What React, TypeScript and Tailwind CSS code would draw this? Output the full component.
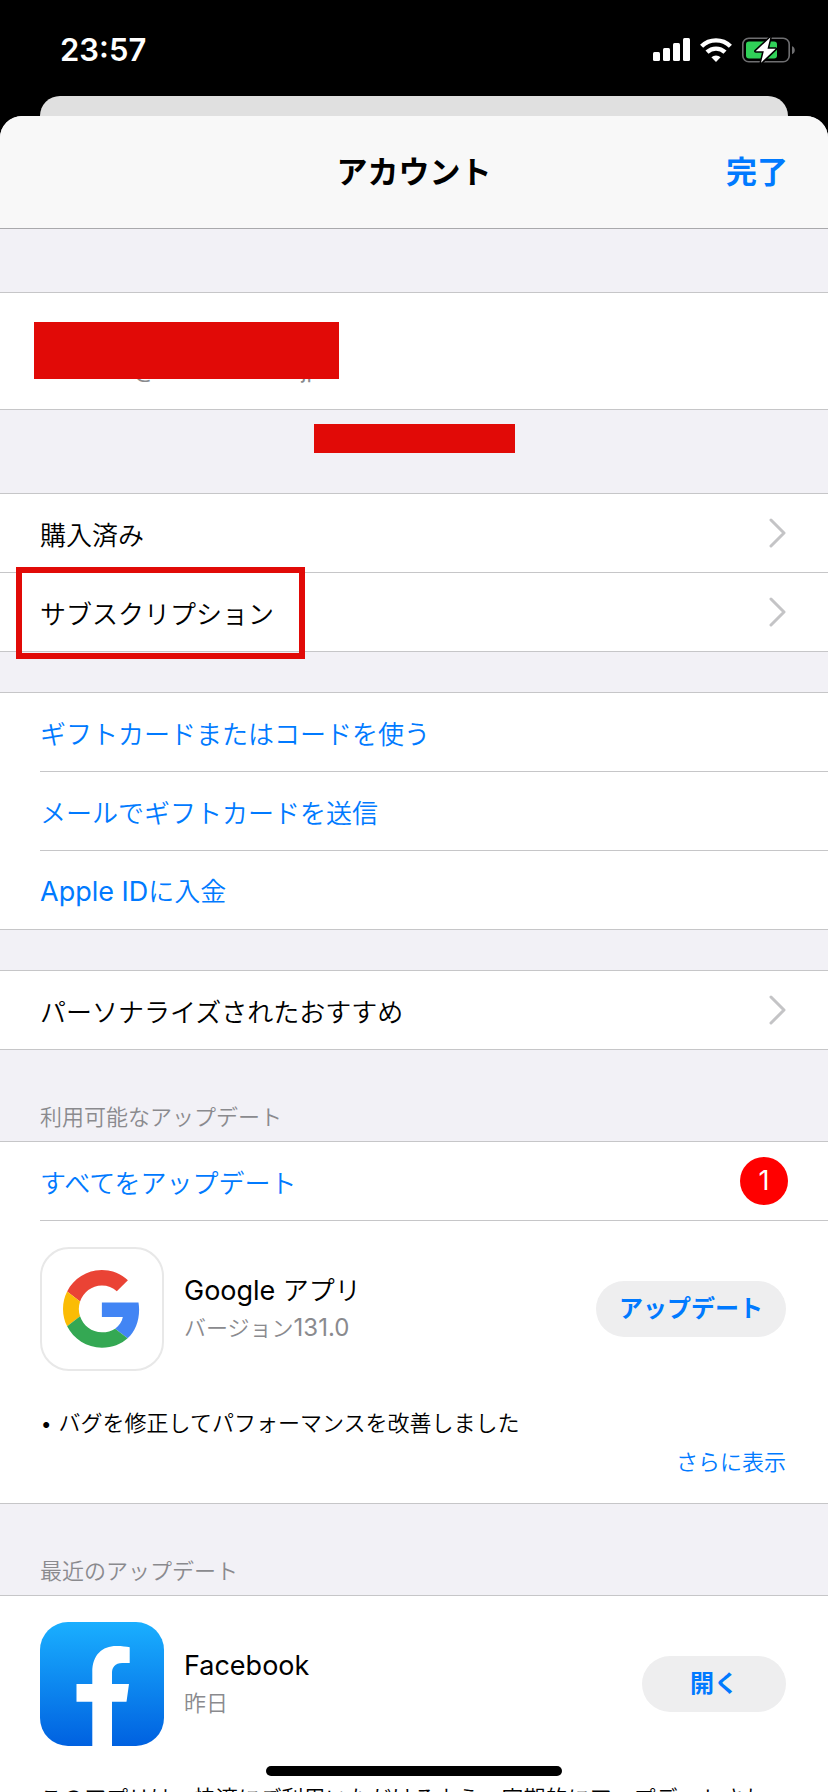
import type { ReactNode } from "react";

const GIFT_LINKS = [
  { id: "redeem", latin: "", label: "ギフトカードまたはコードを使う" },
  { id: "send-gift", latin: "", label: "メールでギフトカードを送信" },
  { id: "add-funds", latin: "Apple ID", label: "に入金" },
];

function SignalIcon() {
  return (
    <svg width="37" height="24" viewBox="0 0 37 24" fill="#fff" aria-hidden="true">
      <rect x="0" y="14" width="7" height="9" rx="1.5" />
      <rect x="10" y="10" width="7" height="13" rx="1.5" />
      <rect x="20" y="5" width="7" height="18" rx="1.5" />
      <rect x="30" y="0" width="7" height="23" rx="1.5" />
    </svg>
  );
}

function WifiIcon() {
  return (
    <svg width="32" height="24" viewBox="0 0 32 24" aria-hidden="true">
      <g fill="none" stroke="#fff" strokeWidth="4.4">
        <path d="M1.6 8.2a20.6 20.6 0 0 1 28.8 0" />
        <path d="M7 14.2a13 13 0 0 1 18 0" />
      </g>
      <path d="M16 24l-4.6-4.7a6.6 6.6 0 0 1 9.2 0z" fill="#fff" />
    </svg>
  );
}

function BatteryIcon() {
  return (
    <svg width="53" height="28" viewBox="0 0 53 28" aria-hidden="true">
      <rect x="0.8" y="2.3" width="46.4" height="23.4" rx="6" fill="none" stroke="#6e6e70" strokeWidth="1.6" />
      <path d="M50 10.2v8c1.8-.6 2.8-2.2 2.8-4s-1-3.4-2.8-4z" fill="#6e6e70" />
      <rect x="4" y="5.5" width="31" height="17" rx="3" fill="#30d158" />
      <path
        d="M28.3 1.5L13.6 15.2h8.2L19 26.8l14.7-14h-8.2z"
        fill="#fff"
        stroke="#000"
        strokeWidth="3"
        strokeLinejoin="round"
        paintOrder="stroke"
      />
    </svg>
  );
}

function Chevron() {
  return (
    <svg width="20" height="30" viewBox="0 0 20 30" fill="none" className="shrink-0" aria-hidden="true">
      <path d="M3 2L16 15L3 28" stroke="#c4c4c6" strokeWidth="3" strokeLinecap="round" strokeLinejoin="round" />
    </svg>
  );
}

function GoogleIcon() {
  return (
    <svg width="124" height="124" viewBox="0 0 124 124" className="shrink-0" aria-hidden="true">
      <rect x="1" y="1" width="122" height="122" rx="28" fill="#fff" stroke="#e8e8e8" strokeWidth="2" />
      <g transform="translate(23 23) scale(1.62)">
        <path fill="#ea4335" d="M24 9.5c3.54 0 6.71 1.22 9.21 3.6l6.85-6.85C35.9 2.38 30.47 0 24 0 14.62 0 6.51 5.38 2.56 13.22l7.98 6.19C12.43 13.72 17.74 9.5 24 9.5z" />
        <path fill="#4285f4" d="M46.98 24.55c0-1.57-.15-3.09-.38-4.55H24v9.02h12.94c-.58 2.96-2.26 5.48-4.78 7.18l7.73 6c4.51-4.18 7.09-10.36 7.09-17.65z" />
        <path fill="#fbbc05" d="M10.53 28.59c-.48-1.45-.76-2.99-.76-4.59s.27-3.14.76-4.59l-7.98-6.19C.92 16.46 0 20.12 0 24c0 3.88.92 7.54 2.56 10.78l7.97-6.19z" />
        <path fill="#34a853" d="M24 48c6.48 0 11.93-2.13 15.89-5.81l-7.73-6c-2.15 1.45-4.92 2.3-8.16 2.3-6.26 0-11.57-4.22-13.47-9.91l-7.98 6.19C6.51 42.62 14.62 48 24 48z" />
      </g>
    </svg>
  );
}

function FacebookIcon() {
  return (
    <svg width="124" height="124" viewBox="0 0 124 124" className="shrink-0" aria-hidden="true">
      <defs>
        <linearGradient id="fb" x1="0" y1="0" x2="0" y2="1">
          <stop offset="0" stopColor="#1aafff" />
          <stop offset="1" stopColor="#0061e0" />
        </linearGradient>
      </defs>
      <rect width="124" height="124" rx="28" fill="url(#fb)" />
      <path
        d="M52.3 124V79.7H36.5V62h15.8V50c0-17 10-26 24-26 6 0 10 .6 13.4 1.3V41h-7.5C75 41 72 45.5 72 51v11h17l-2.5 17.7H72V124z"
        fill="#fff"
      />
    </svg>
  );
}

function Group({ children }: { children: ReactNode }) {
  return <section className="border-y border-[#c6c6c8] bg-white">{children}</section>;
}

function SectionTitle({ children }: { children: ReactNode }) {
  return (
    <h2 className="px-10 pt-[52px] pb-2 text-[22px] leading-[31px] text-[#8a8a8e]">{children}</h2>
  );
}

type AppHeaderProps = { icon: ReactNode; name: ReactNode; detail: ReactNode; action: string };

function AppHeader({ icon, name, detail, action }: AppHeaderProps) {
  return (
    <div className="flex items-center gap-5">
      {icon}
      <div className="min-w-0 flex-1">
        <h3 className="text-[26px] leading-[38px]">{name}</h3>
        <p className="text-[22px] leading-[36px] text-[#8a8a8e]">{detail}</p>
      </div>
      <button className="h-14 min-w-36 shrink-0 rounded-full bg-[#eeeeef] px-[23px] text-2xl font-bold text-[#007aff]">
        {action}
      </button>
    </div>
  );
}

export default function App() {
  return (
    <div
      lang="ja"
      className="relative flex h-screen flex-col overflow-hidden bg-black font-['Inter','Noto_Sans_CJK_JP',sans-serif] font-[350] text-black"
    >
      <div className="flex h-24 shrink-0 items-center justify-between pt-1 pr-[33px] pl-[60px]">
        <span className="text-[31px] font-semibold text-white">23:57</span>
        <div className="flex items-center gap-[10px]">
          <SignalIcon />
          <WifiIcon />
          <BatteryIcon />
        </div>
      </div>

      {/* edge of the page behind the sheet */}
      <div className="mx-10 h-5 shrink-0 rounded-t-[20px] bg-[#e0e0e0]" />

      <main className="min-h-0 flex-1 overflow-hidden rounded-t-[22px] bg-[#f2f1f6]">
        <header className="grid h-[113px] grid-cols-3 items-center border-b border-[#a9a9ac] bg-[#f8f8f8] px-10 text-[31px] font-bold">
          <h1 className="col-start-2 text-center">アカウント</h1>
          <button className="justify-self-end text-[#007aff]">完了</button>
        </header>

        <div className="h-[63px]" />
        <Group>
          <div className="relative h-[116px] pt-[62px]">
            <p className="flex gap-[146px] pl-[134px] text-[22px] leading-[30px] font-normal text-[#8a8a8e]">
              <span>@</span>
              <span>jp</span>
            </p>
            <div className="absolute top-[29px] left-[34px] h-[57px] w-[305px] bg-[#e10a07]" />
          </div>
        </Group>

        <div className="flex h-[83px] justify-center pt-[14px]">
          <div className="h-[29px] w-[201px] bg-[#e10a07]" />
        </div>

        <Group>
          <a href="#purchased" className="flex h-[79px] items-center justify-between border-b border-[#c6c6c8] px-10 text-[26px]">
            <span className="pt-1">購入済み</span>
            <Chevron />
          </a>
          <a href="#subscriptions" className="relative flex h-[78px] items-center justify-between px-10 text-[26px]">
            <span className="pt-1">サブスクリプション</span>
            <Chevron />
            <span className="absolute -top-[6px] left-4 h-[92px] w-[289px] border-6 border-[#e10a07]" />
          </a>
        </Group>

        <div className="h-10" />
        <Group>
          <ul className="divide-y divide-[#c6c6c8] pl-10">
            {GIFT_LINKS.map((link) => (
              <li key={link.id}>
                <a href={`#${link.id}`} className="flex h-[78px] items-center pt-1 text-[26px] text-[#007aff]">
                  <span>
                    {link.latin && <span className="text-[27px] font-normal">{link.latin}</span>}
                    {link.label}
                  </span>
                </a>
              </li>
            ))}
          </ul>
        </Group>

        <div className="h-10" />
        <Group>
          <a href="#recommendations" className="flex h-[78px] items-center justify-between px-10 text-[26px]">
            <span className="pt-1">パーソナライズされたおすすめ</span>
            <Chevron />
          </a>
        </Group>

        <SectionTitle>利用可能なアップデート</SectionTitle>
        <Group>
          <div className="ml-10 flex h-[79px] items-center justify-between border-b border-[#c6c6c8] pr-10">
            <button className="pt-1 text-[26px] text-[#007aff]">すべてをアップデート</button>
            <span className="flex size-12 items-center justify-center rounded-full bg-[#ff0000] text-[27px] font-normal text-white">
              1
            </span>
          </div>
          <article className="pt-[26px] pr-[42px] pb-[22px] pl-10">
            <AppHeader
              icon={<GoogleIcon />}
              name={
                <>
                  <span className="text-[27px] font-normal">Google</span> アプリ
                </>
              }
              detail={
                <>
                  バージョン<span className="text-2xl leading-none font-normal">131.0</span>
                </>
              }
              action="アップデート"
            />
            <p className="mt-8 text-[22px] leading-10">• バグを修正してパフォーマンスを改善しました</p>
            <div className="flex h-[38px] items-center justify-end">
              <button className="text-[22px] text-[#007aff]">さらに表示</button>
            </div>
          </article>
        </Group>

        <SectionTitle>最近のアップデート</SectionTitle>
        <Group>
          <article className="pt-[26px] pr-[42px] pb-[22px] pl-10">
            <AppHeader
              icon={<FacebookIcon />}
              name={<span className="text-[27px] font-normal">Facebook</span>}
              detail="昨日"
              action="開く"
            />
            <p className="mt-8 text-[22px] leading-10">
              このアプリは、快適にご利用いただけるよう、定期的にアップデートされ
            </p>
          </article>
        </Group>
      </main>

      {/* home indicator */}
      <div className="absolute bottom-4 left-1/2 h-[10px] w-[296px] -translate-x-1/2 rounded-full bg-black" />
    </div>
  );
}
